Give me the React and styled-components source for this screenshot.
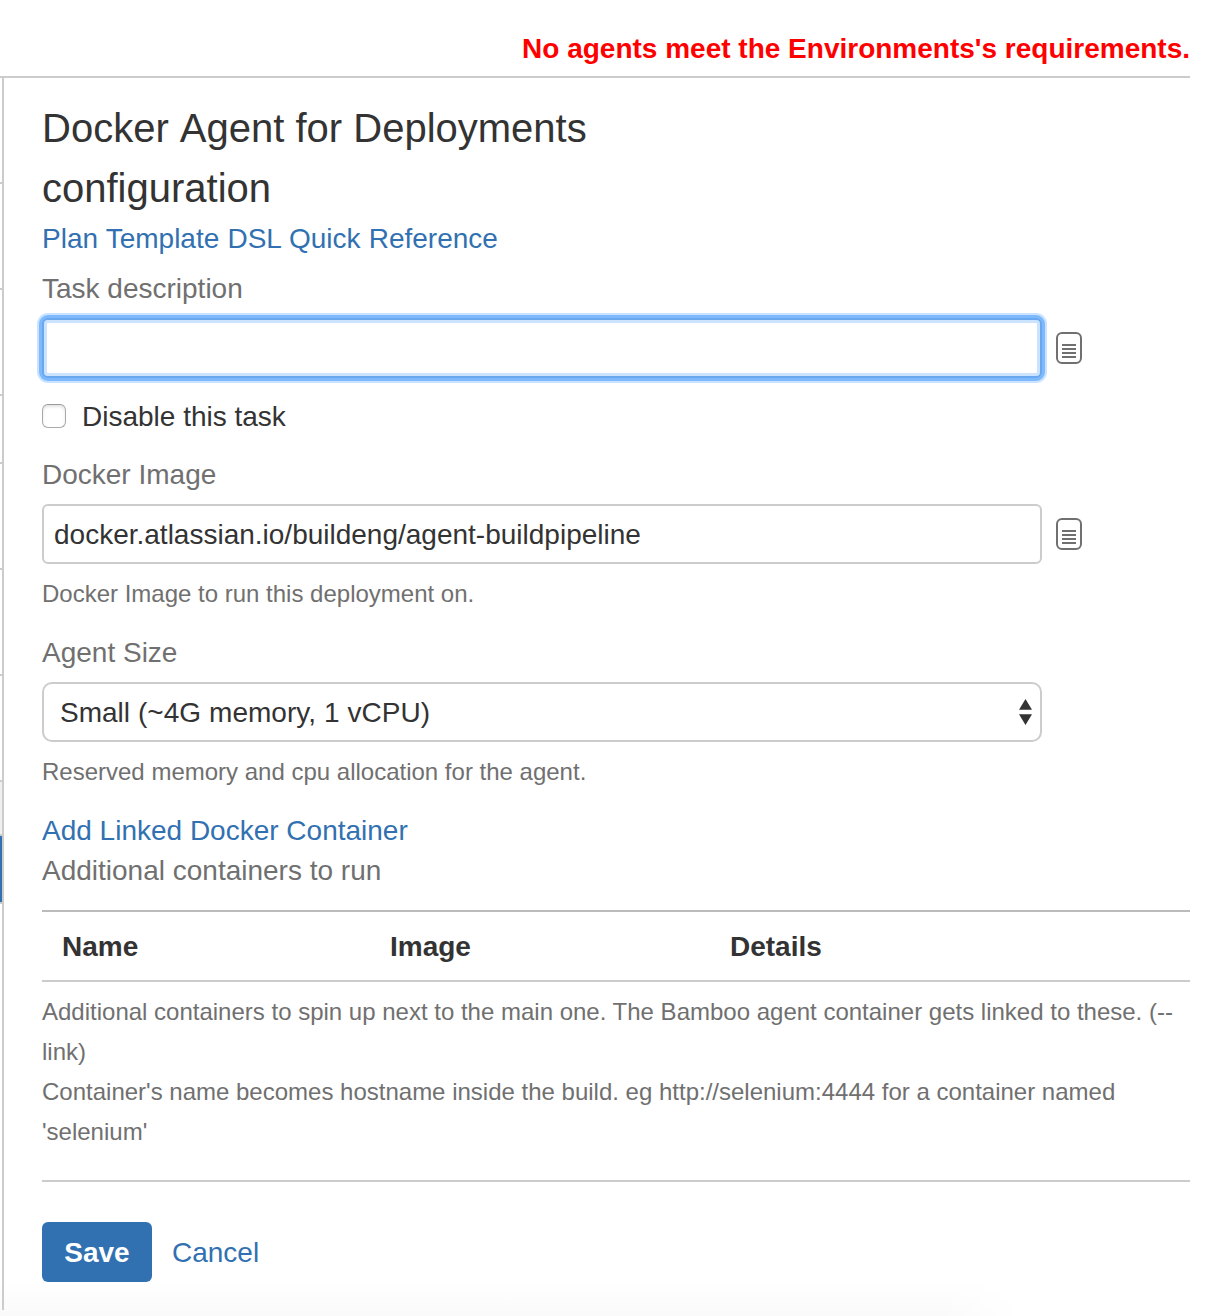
import React from "react";
import styled, { createGlobalStyle, css } from "styled-components";

const GlobalStyle = createGlobalStyle`
  *, *::before, *::after { box-sizing: border-box; }
  body {
    margin: 0;
    background: #fff;
    color: #333;
    font: 28px/40px "Liberation Sans", Arial, sans-serif;
  }
`;

/* A 40px text line whose baseline sits one pixel low. */
const textLine = css`
  padding-top: 2px;
  line-height: 38px;
  white-space: nowrap;
`;

const Page = styled.div`
  width: 1222px;
  height: 1316px;
  overflow: hidden;
  background:
    linear-gradient(to right, rgba(255, 255, 255, 0) 940px, #fff 1020px),
    linear-gradient(to top, #fafafa, #fff 36px) bottom / 100% 36px no-repeat,
    #fff;
`;

const Header = styled.header`
  display: flex;
  justify-content: flex-end;
  width: 1190px;
  height: 78px;
  padding-top: 28px;
  border-bottom: 2px solid #ccc;
`;

const Warning = styled.strong`
  ${textLine}
  color: #f00;
`;

const Body = styled.div`
  display: flex;
  height: 1232px;
`;

const TaskList = styled.ul`
  width: 2px;
  margin: 0;
  padding: 0;
  list-style: none;
`;

const TaskItem = styled.li`
  height: ${(p) => p.$height}px;
  border-bottom: 2px solid #ccc;
  background: ${(p) => p.$fill || "#fff"};
`;

const Panel = styled.main`
  flex: none;
  width: 1188px;
  padding: 20px 0 0 38px;
  border-left: 2px solid #ccc;
`;

const Title = styled.h2`
  margin: 0;
  font-size: 40px;
  line-height: 60px;
  font-weight: 400;
  font-kerning: none;
  white-space: nowrap;
`;

const Link = styled.a`
  ${textLine}
  display: block;
  color: #3271b1;
  text-decoration: none;
  word-spacing: ${(p) => p.$wordSpacing || 0}px;
`;

const Label = styled.label`
  ${textLine}
  display: block;
  margin-top: ${(p) => p.$top || 0}px;
  color: #707070;
`;

const FieldRow = styled.div`
  display: flex;
  align-items: center;
  gap: 14px;
  margin-top: 10px;
`;

const TextInput = styled.input`
  width: 1000px;
  height: 60px;
  padding: 2px 10px 0;
  border: 2px solid ${(p) => (p.$active ? "#69a8ee" : "#ccc")};
  border-radius: 6px;
  outline: none;
  background: #fff;
  color: #333;
  font: inherit;
  box-shadow: ${(p) =>
    p.$active
      ? "inset 0 0 0 3px #cbe3ff, 0 0 0 3px #7db9fc, 0 0 0 5px #cbe3ff"
      : "none"};
`;

const SelectBox = styled.div`
  display: flex;
  align-items: center;
  justify-content: space-between;
  width: 1000px;
  height: 60px;
  margin-top: 10px;
  padding: 0 8px 0 16px;
  border: 2px solid #ccc;
  border-radius: 10px;
  background: #fff;
`;

const SelectValue = styled.span`
  ${textLine}
  word-spacing: 0.25px;
`;

const CheckRow = styled.label`
  display: flex;
  align-items: center;
  gap: 16px;
  margin-top: 18px;
`;

const CheckText = styled.span`
  ${textLine}
`;

const Checkbox = styled.input`
  appearance: none;
  width: 24px;
  height: 24px;
  margin: 0;
  border: 1px solid #aaa;
  border-top-color: #999;
  border-radius: 6px;
  background: #fff;
  box-shadow: inset 0 2px 3px #e4e4e4;
`;

const Hint = styled.p`
  margin: 10px 0 0;
  color: #707070;
  font-size: 24px;
  line-height: 40px;
  white-space: nowrap;
`;

const LinkedContainers = styled.section`
  margin-top: 18px;
`;

const TableHead = styled.div`
  display: grid;
  grid-template-columns: 328px 340px 1fr;
  align-items: center;
  height: 72px;
  margin-top: 20px;
  padding: 2px 20px 0;
  border-top: 2px solid #bbb;
  border-bottom: 2px solid #ccc;
  font-weight: 700;
`;

const Actions = styled.footer`
  display: flex;
  align-items: center;
  gap: 20px;
  margin-top: 28px;
  padding-top: 40px;
  border-top: 2px solid #ccc;
`;

const SaveButton = styled.button`
  width: 110px;
  height: 60px;
  padding: 2px 0 0;
  border: 0;
  border-radius: 6px;
  background: #3271b1;
  color: #fff;
  font: inherit;
  font-weight: 700;
`;

const VariableIcon = () => (
  <svg width="26" height="32" viewBox="0 0 26 32" fill="none" stroke="#707070" strokeWidth="2">
    <rect x="1" y="1" width="24" height="30" rx="5" />
    <path d="M6 13h14M6 17h14M6 21h14M6 25h14" />
  </svg>
);

const SelectArrows = () => (
  <svg width="13" height="26" viewBox="0 0 13 26" fill="#333">
    <path d="M0 10.8 6.5 0 13 10.8zM0 15.2h13L6.5 26z" />
  </svg>
);

const tasks = [
  { height: 106 },
  { height: 106 },
  { height: 106 },
  { height: 68 },
  { height: 106 },
  { height: 106 },
  { height: 106 },
  { height: 54, fill: "#f0f0f0" },
  { height: 68, fill: "#3271b1" },
];

export default function App() {
  return (
    <Page>
      <GlobalStyle />
      <Header>
        <Warning>No agents meet the Environments's requirements.</Warning>
      </Header>
      <Body>
        <TaskList>
          {tasks.map((task, i) => (
            <TaskItem key={i} $height={task.height} $fill={task.fill} />
          ))}
        </TaskList>
        <Panel>
          <Title>
            Docker Agent for Deployments
            <br />
            configuration
          </Title>
          <Link $wordSpacing={0.35}>Plan Template DSL Quick Reference</Link>

          <Label $top={10} htmlFor="description">Task description</Label>
          <FieldRow>
            <TextInput id="description" $active />
            <VariableIcon />
          </FieldRow>

          <CheckRow>
            <Checkbox type="checkbox" />
            <CheckText>Disable this task</CheckText>
          </CheckRow>

          <Label $top={18} htmlFor="image">Docker Image</Label>
          <FieldRow>
            <TextInput id="image" defaultValue="docker.atlassian.io/buildeng/agent-buildpipeline" />
            <VariableIcon />
          </FieldRow>
          <Hint>Docker Image to run this deployment on.</Hint>

          <Label $top={18}>Agent Size</Label>
          <SelectBox>
            <SelectValue>Small (~4G memory, 1 vCPU)</SelectValue>
            <SelectArrows />
          </SelectBox>
          <Hint>Reserved memory and cpu allocation for the agent.</Hint>

          <LinkedContainers>
            <Link>Add Linked Docker Container</Link>
            <Label>Additional containers to run</Label>
            <TableHead>
              <span>Name</span>
              <span>Image</span>
              <span>Details</span>
            </TableHead>
            <Hint>
              Additional containers to spin up next to the main one. The Bamboo agent container gets linked to these. (--
              <br />
              link)
              <br />
              Container's name becomes hostname inside the build. eg http://selenium:4444 for a container named
              <br />
              'selenium'
            </Hint>
          </LinkedContainers>

          <Actions>
            <SaveButton type="button">Save</SaveButton>
            <Link>Cancel</Link>
          </Actions>
        </Panel>
      </Body>
    </Page>
  );
}
